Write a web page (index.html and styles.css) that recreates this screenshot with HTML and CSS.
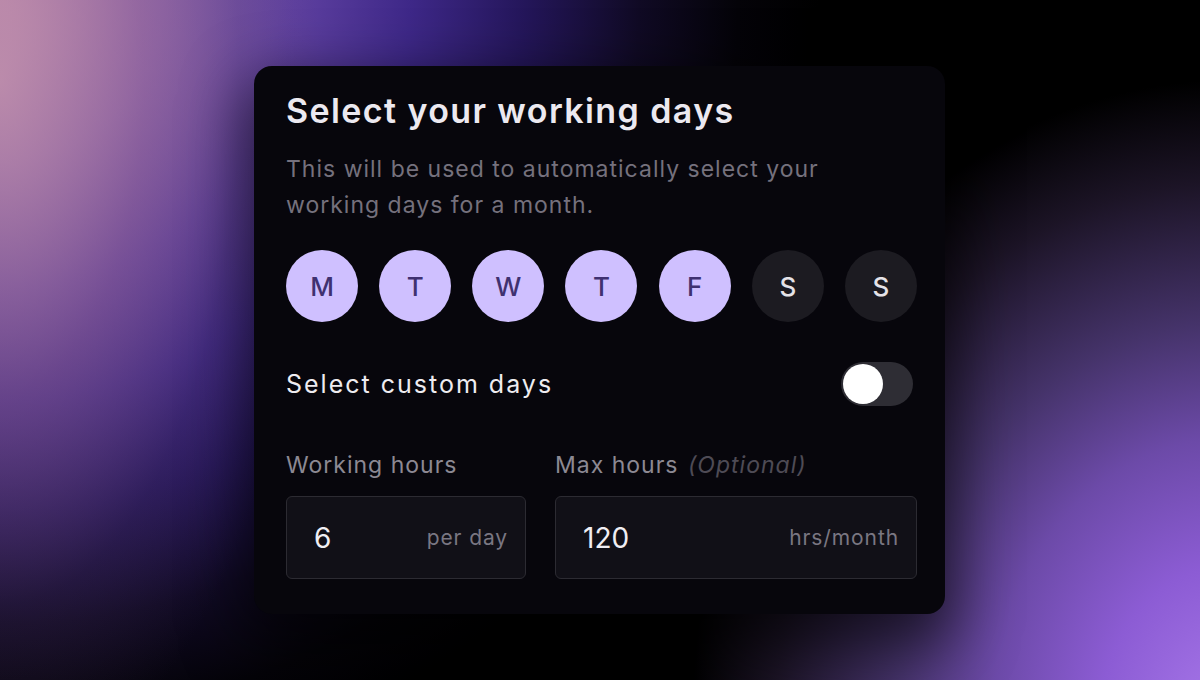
FILE: index.html
```html
<!DOCTYPE html>
<html lang="en">
<head>
<meta charset="utf-8">
<title>Select your working days</title>
<link rel="stylesheet" href="styles.css">
</head>
<body>
<div class="stage">
  <section class="card">
    <h1 class="title">Select your working days</h1>
    <p class="desc">This will be used to automatically select your working days for a month.</p>
    <div class="days">
      <span class="day on">M</span>
      <span class="day on">T</span>
      <span class="day on">W</span>
      <span class="day on">T</span>
      <span class="day on">F</span>
      <span class="day">S</span>
      <span class="day">S</span>
    </div>
    <div class="custom">
      <span class="custom-label">Select custom days</span>
      <span class="toggle"><span class="knob"></span></span>
    </div>
    <div class="fields">
      <div class="field">
        <div class="label">Working hours</div>
        <div class="input"><span class="value">6</span><span class="suffix">per day</span></div>
      </div>
      <div class="field">
        <div class="label">Max hours <em class="opt">(Optional)</em></div>
        <div class="input"><span class="value">120</span><span class="suffix">hrs/month</span></div>
      </div>
    </div>
  </section>
</div>
</body>
</html>
```
FILE: styles.css
```css
* { box-sizing: border-box; }
html, body { margin: 0; padding: 0; }
body {
  width: 1200px;
  height: 680px;
  overflow: hidden;
  font-family: Inter, "Noto Sans", sans-serif;
  background-color: #000;
  background-image:
    radial-gradient(ellipse 540px 640px at 1230px 720px, #a878ea 0%, #8c5cd4 24%, #6c4aa8 44%, #45336a 62%, #1c1426 84%, rgba(0,0,0,0) 100%),
    radial-gradient(ellipse 320px 700px at 0 80px, rgba(196,146,168,0.75) 0%, rgba(150,100,140,0.45) 45%, rgba(90,60,100,0.2) 75%, rgba(0,0,0,0) 100%),
    radial-gradient(ellipse 820px 800px at 0 0, #b888b8 0%, #8a64b0 20%, #5e40a0 36%, #3e2888 50%, #24165a 64%, #100a24 78%, #040308 90%, #000 100%);
}
.stage {
  display: flex;
  padding: 66px 0 0 254px;
}
.card {
  width: 691px;
  height: 548px;
  background: #07060c;
  border-radius: 18px;
  padding: 24px 28px 0 32px;
  box-shadow: 0 24px 60px 10px rgba(0,0,0,0.6);
  display: flex;
  flex-direction: column;
}
.title {
  margin: 0;
  font-size: 34px;
  line-height: 42px;
  font-weight: 600;
  letter-spacing: 1.4px;
  color: #ece9f0;
}
.desc {
  margin: 19px 0 0;
  width: 600px;
  font-size: 23px;
  line-height: 36px;
  letter-spacing: 1px;
  color: #75717d;
}
.days {
  margin-top: 27px;
  display: flex;
  justify-content: space-between;
}
.day {
  width: 72px;
  height: 72px;
  border-radius: 50%;
  background: #1c1b21;
  color: #e5e3e8;
  font-size: 26px;
  font-weight: 500;
  display: flex;
  align-items: center;
  justify-content: center;
}
.day.on {
  background: #cfc0ff;
  color: #3f3170;
}
.custom {
  margin-top: 40px;
  display: flex;
  align-items: center;
  justify-content: space-between;
  padding-right: 4px;
}
.custom-label {
  font-size: 25px;
  letter-spacing: 2px;
  color: #eeecf0;
}
.toggle {
  width: 72px;
  height: 44px;
  border-radius: 22px;
  background: #2e2d34;
  padding: 2px;
  display: flex;
}
.knob {
  width: 40px;
  height: 40px;
  border-radius: 50%;
  background: #fff;
}
.fields {
  margin-top: 44px;
  display: grid;
  grid-template-columns: 240px 1fr;
  column-gap: 29px;
}
.label {
  font-size: 23px;
  line-height: 30px;
  letter-spacing: 1px;
  color: #8c8993;
}
.opt {
  color: #4e4b55;
  font-style: italic;
  margin-left: 2px;
}
.input {
  margin-top: 16px;
  height: 83px;
  background: #111017;
  border: 1px solid #2c2b32;
  border-radius: 6px;
  display: flex;
  align-items: center;
  justify-content: space-between;
  padding: 0 17px 0 27px;
}
.value {
  font-size: 28px;
  color: #f0eef3;
}
.suffix {
  font-size: 21px;
  letter-spacing: 0.9px;
  color: #7a7782;
}
```
